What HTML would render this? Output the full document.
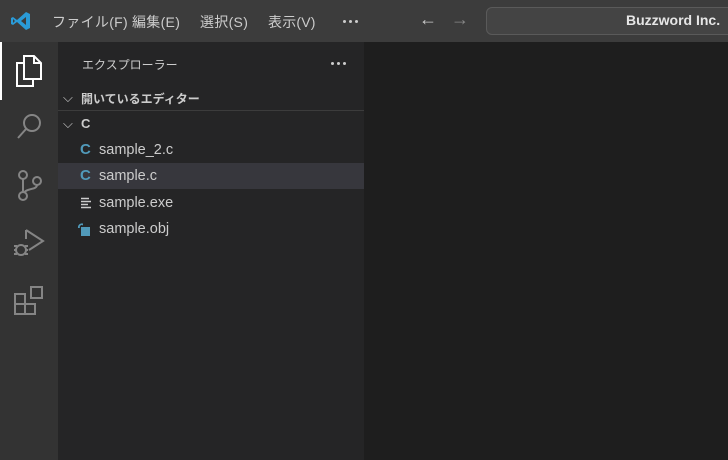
<!DOCTYPE html>
<html><head><meta charset="utf-8"><style>
*{margin:0;padding:0;box-sizing:border-box}
body{width:728px;height:460px;overflow:hidden;background:#1e1e1e;font-family:"Liberation Sans","Noto Sans CJK JP",sans-serif;position:relative}
.title{position:absolute;left:0;top:0;width:728px;height:42px;background:#3c3c3c;color:#ccc;font-size:14px}
.title span{position:absolute;top:12px}
.act{position:absolute;left:0;top:42px;width:58px;height:418px;background:#333}
.side{position:absolute;left:58px;top:42px;width:306px;height:418px;background:#252526;color:#ccc}
.t{position:absolute;font-size:14px}
.row{position:absolute;left:0;width:306px;height:26px}
.row span{position:absolute;left:41px;top:5px;font-size:14.5px;color:#ccc}
.ci{position:absolute;left:22px;top:4px;color:#519aba;font-weight:bold;font-size:15px}
.dots{position:absolute;display:flex;gap:3px}
.dots i{width:3px;height:3px;border-radius:50%;background:#ccc;display:block}
</style></head><body>
<div class="title">
<svg style="position:absolute;left:10px;top:10px" width="22" height="22" viewBox="0 0 22 22"><path d="M16 2 L20 4 V18 L16 20 L7 12 L3 15 L1 14 V8 L3 7 L7 10 Z M16 7 L11 11 L16 15 Z M3 9 V13 L5 11 Z" fill="#2a9bd8"/></svg>
<span style="left:52px;letter-spacing:0.3px">ファイル(F)</span>
<span style="left:132px;letter-spacing:0.3px">編集(E)</span>
<span style="left:200px;letter-spacing:0.3px">選択(S)</span>
<span style="left:268px;letter-spacing:0.2px">表示(V)</span>
<div class="dots" style="left:343px;top:20px"><i></i><i></i><i></i></div>
<span style="left:419px;top:9px;font-size:18px;color:#ccc">←</span>
<span style="left:451px;top:9px;font-size:18px;color:#888">→</span>
<div style="position:absolute;left:486px;top:7px;width:260px;height:28px;border:1px solid #5a5a5a;border-radius:6px;background:#444"></div>
<span style="left:626px;top:12px;color:#e6e6e6;font-size:14px;font-weight:bold">Buzzword Inc.</span>
</div>
<div class="act">
<div style="position:absolute;left:0;top:0;width:2px;height:58px;background:#fff"></div>
<svg style="position:absolute;left:14px;top:12px" width="30" height="34" viewBox="0 0 30 34" fill="none" stroke="#fff" stroke-width="2"><path d="M10 2 H20 L27 9 V25 H10 Z"/><path d="M20 2 V9 H27"/><path d="M10 9 H3 V32 H19 V25"/></svg>
<svg style="position:absolute;left:15px;top:70px" width="30" height="30" viewBox="0 0 30 30" fill="none" stroke="#858585" stroke-width="2"><circle cx="17" cy="11" r="8"/><path d="M11 17 L3 26"/></svg>
<svg style="position:absolute;left:14px;top:126px" width="30" height="36" viewBox="0 0 30 36" fill="none" stroke="#858585" stroke-width="2"><circle cx="9" cy="7" r="4"/><circle cx="9" cy="28" r="4"/><circle cx="23" cy="13" r="4"/><path d="M9 11 V24 M23 17 C23 22 12 20 10 25"/></svg>
<svg style="position:absolute;left:12px;top:184px" width="34" height="34" viewBox="0 0 34 34" fill="none" stroke="#858585" stroke-width="2"><path d="M14 4 L31 15 L17 24"/><path d="M14 4 V13"/><circle cx="9" cy="24" r="5"/><path d="M2 20 H5 M2 24 H4 M2 28 H5 M13 20 H16 M14 24 H16 M13 28 H16"/></svg>
<svg style="position:absolute;left:13px;top:243px" width="32" height="32" viewBox="0 0 32 32" fill="none" stroke="#858585" stroke-width="2"><rect x="2" y="9" width="10" height="10"/><rect x="2" y="19" width="10" height="10"/><rect x="12" y="19" width="10" height="10"/><rect x="18" y="2" width="11" height="11"/></svg>
</div>
<div class="side">
<div class="t" style="left:24px;top:14px;font-size:12px">エクスプローラー</div>
<div class="dots" style="left:273px;top:20px"><i></i><i></i><i></i></div>
<div class="t" style="left:5px;top:48px;font-size:13px">⌵</div>
<div class="t" style="left:23px;top:48px;font-size:12px;font-weight:bold">開いているエディター</div>
<div style="position:absolute;left:0;top:68px;width:306px;height:1px;background:#3c3c3c"></div>
<div class="t" style="left:5px;top:74px;font-size:13px">⌵</div>
<div class="t" style="left:23px;top:74px;font-size:13px;font-weight:bold">C</div>
<div class="row" style="top:95px"><b class="ci">C</b><span>sample_2.c</span></div>
<div class="row" style="top:121px;background:#37373d"><b class="ci">C</b><span>sample.c</span></div>
<div class="row" style="top:148px"><svg style="position:absolute;left:22px;top:7px" width="12" height="12" viewBox="0 0 12 12" stroke="#ccc" stroke-width="1.5"><path d="M1 1.5H9 M1 4.5H11 M1 7.5H8 M1 10.5H11"/></svg><span>sample.exe</span></div>
<div class="row" style="top:174px"><svg style="position:absolute;left:18px;top:6px" width="16" height="16" viewBox="0 0 16 16"><path d="M2 6 A4 4 0 0 1 7 1.5 V3.5 A2 2 0 0 0 4 6 Z" fill="#519aba"/><rect x="5" y="5" width="9" height="9" fill="#519aba"/></svg><span>sample.obj</span></div>
</div>
</body></html>
